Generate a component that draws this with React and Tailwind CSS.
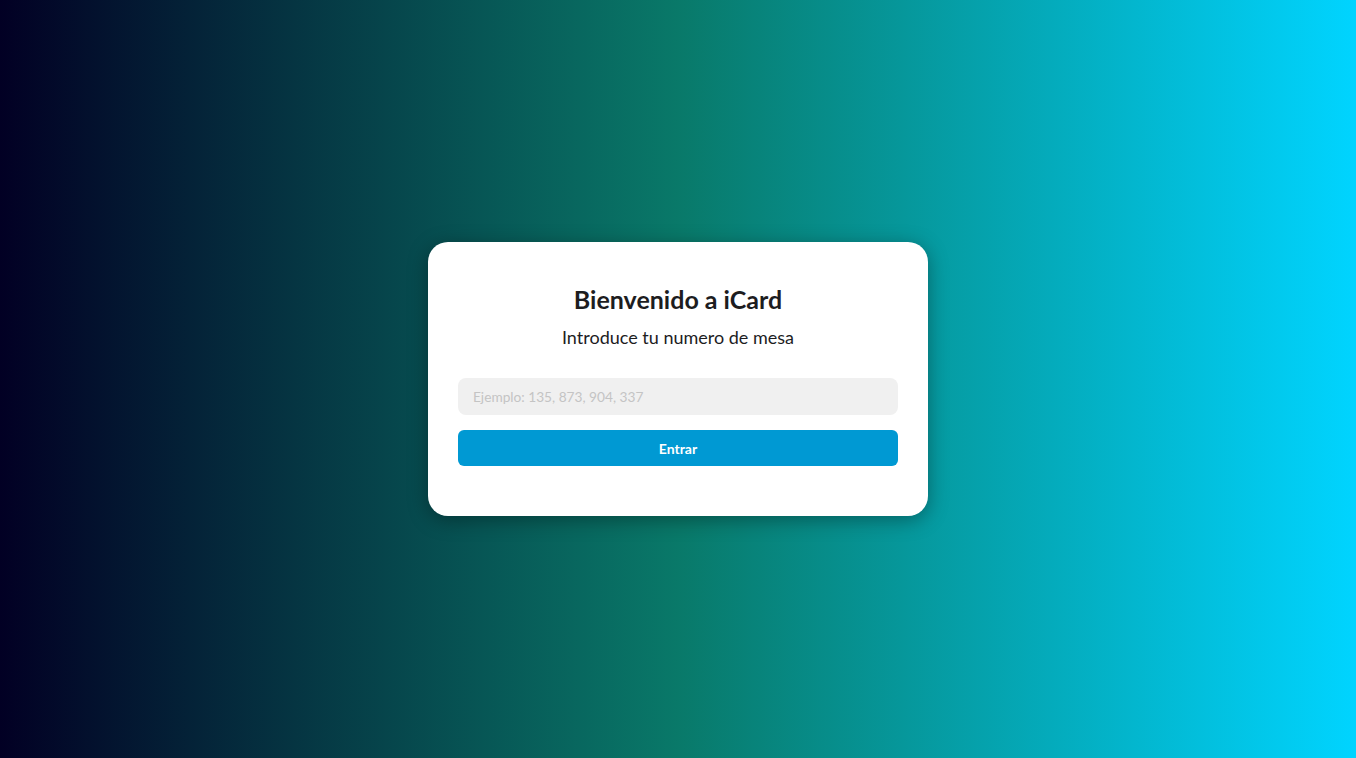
export default function App() {
  return (
    <div className="min-h-screen w-full flex items-center justify-center bg-[linear-gradient(90deg,#020024_0%,#097969_50%,#00d4ff_100%)] font-['Lato',sans-serif]">
      <div className="w-[500px] bg-white rounded-[20px] shadow-[0_4px_20px_rgba(0,0,0,0.35)] px-[30px] pt-[41px] pb-[50px] flex flex-col">
        <h1 className="text-center text-[25px] leading-[32px] font-bold text-[#1d1d1f]">
          Bienvenido a iCard
        </h1>
        <p className="text-center text-[18px] leading-[26px] text-[#1d1d1f] mt-[9px]">
          Introduce tu numero de mesa
        </p>
        <form className="mt-[28px] flex flex-col gap-[15px]" onSubmit={(e) => e.preventDefault()}>
          <input
            type="text"
            placeholder="Ejemplo: 135, 873, 904, 337"
            className="h-[37px] w-full rounded-[8px] bg-[#f0f0f0] px-[15px] text-[13.7px] text-gray-800 placeholder:text-[#c4c4c4] outline-none"
          />
          <button
            type="submit"
            className="h-[36px] w-full rounded-[6px] bg-[#0099d3] text-white text-[14px] font-bold"
          >
            Entrar
          </button>
        </form>
      </div>
    </div>
  )
}
